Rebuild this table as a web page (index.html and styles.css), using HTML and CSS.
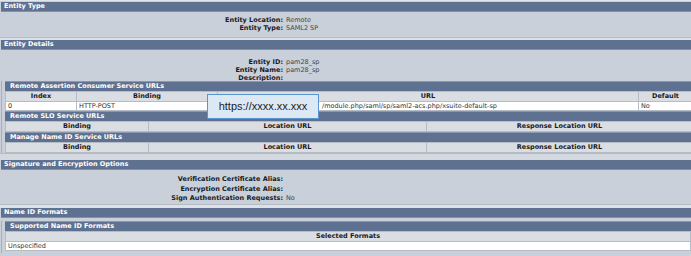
FILE: index.html
```html
<!DOCTYPE html>
<html>
<head>
<meta charset="utf-8">
<link rel="stylesheet" href="styles.css">
</head>
<body>
<div class="page">
  <div class="hdr">Entity Type</div>
  <div class="kv kv-type">
    <span class="k">Entity Location:</span><span class="v">Remote</span>
    <span class="k">Entity Type:</span><span class="v">SAML2 SP</span>
  </div>
  <div class="sep"></div>
  <div class="hdr">Entity Details</div>
  <div class="kv kv-details">
    <span class="k">Entity ID:</span><span class="v">pam28_sp</span>
    <span class="k">Entity Name:</span><span class="v">pam28_sp</span>
    <span class="k">Description:</span><span class="v"></span>
  </div>
  <div class="sub">
    <div class="subhdr">Remote Assertion Consumer Service URLs</div>
    <table class="grid">
      <colgroup><col class="c-idx"><col class="c-bind"><col class="c-url"><col class="c-def"></colgroup>
      <tr class="th"><td>Index</td><td>Binding</td><td>URL</td><td>Default</td></tr>
      <tr class="td"><td>0</td><td>HTTP-POST</td><td><span class="url-tail">/module.php/saml/sp/saml2-acs.php/xsuite-default-sp</span></td><td>No</td></tr>
    </table>
    <div class="subhdr">Remote SLO Service URLs</div>
    <table class="grid">
      <colgroup><col class="c-b2"><col class="c-loc"><col class="c-resp"></colgroup>
      <tr class="th"><td>Binding</td><td>Location URL</td><td>Response Location URL</td></tr>
    </table>
    <div class="subhdr">Manage Name ID Service URLs</div>
    <table class="grid">
      <colgroup><col class="c-b2"><col class="c-loc"><col class="c-resp"></colgroup>
      <tr class="th"><td>Binding</td><td>Location URL</td><td>Response Location URL</td></tr>
    </table>
    <div class="tip">https://xxxx.xx.xxx</div>
  </div>
  <div class="gap"></div>
  <div class="hdr">Signature and Encryption Options</div>
  <div class="kv kv-sig">
    <span class="k">Verification Certificate Alias:</span><span class="v"></span>
    <span class="k">Encryption Certificate Alias:</span><span class="v"></span>
    <span class="k">Sign Authentication Requests:</span><span class="v">No</span>
  </div>
  <div class="sep sep-sig"></div>
  <div class="hdr">Name ID Formats</div>
  <div class="sub sub-fmt">
    <div class="subhdr">Supported Name ID Formats</div>
    <table class="grid">
      <tr class="th"><td>Selected Formats</td></tr>
      <tr class="td"><td>Unspecified</td></tr>
    </table>
  </div>
</div>
</body>
</html>
```

FILE: styles.css
```css
html, body {
  margin: 0;
  padding: 0;
  background: #c9d0da;
}
.page {
  position: relative;
  width: 691px;
  height: 256px;
  overflow: hidden;
  padding-top: 1px;
  box-sizing: border-box;
  background: #c9d0da;
  border-top: 1px solid #e2e5ea;
  font-family: "DejaVu Sans", Verdana, sans-serif;
  font-size: 6.5px;
  color: #222;
}
.hdr {
  background: #5f7190;
  color: #fff;
  font-weight: bold;
  height: 9px;
  line-height: 9px;
  padding-left: 3px;
  margin-left: 1px;
  border-bottom: 1px solid #8390a8;
}
.kv {
  display: grid;
  grid-template-columns: 283px auto;
  column-gap: 3px;
  line-height: 8px;
}
.kv .k {
  text-align: right;
  font-weight: bold;
  color: #1a1a1a;
}
.kv .v {
  color: #444;
}
.kv-type {
  padding: 4px 0 5px;
  height: 16px;
}
.kv-details {
  padding: 8px 0 0;
  height: 23px;
}
.kv-sig {
  padding: 5px 0 0;
  height: 29px;
  line-height: 8.5px;
}
.sep {
  height: 2px;
  background: #dde0e5;
  border-top: 1px solid #b5bcc6;
}
.sep-sig {
  height: 3px;
}
.gap {
  height: 6px;
  border-top: 1px solid #b3bac4;
  background: #d4d9e0;
}
.sub {
  position: relative;
  padding-left: 3px;
  margin-left: 1px;
  border-left: 1px solid #a7afba;
}
.sub-fmt {
  margin-top: 3px;
  padding-bottom: 2px;
}
.subhdr {
  background: #5f7190;
  color: #fff;
  font-weight: bold;
  height: 9px;
  line-height: 9px;
  padding-left: 5px;
  border-top: 1px solid #8a97ad;
}
.grid {
  width: 100%;
  border-collapse: collapse;
  table-layout: fixed;
}
.grid td {
  height: 9px;
  line-height: 9px;
  padding: 0 2px;
  border: 1px solid #b5bcc6;
  white-space: nowrap;
  overflow: hidden;
}
.grid .th td {
  background: #dadde2;
  font-weight: bold;
  text-align: center;
  color: #1a1a1a;
}
.grid .td td {
  height: 8px;
  line-height: 8px;
  background: #ffffff;
  color: #333;
  text-align: left;
}
.url-tail {
  padding-left: 102px;
}
.c-idx { width: 71px; }
.c-bind { width: 141px; }
.c-url { width: 421px; }
.c-def { width: 54px; }
.c-b2 { width: 143px; }
.c-loc { width: 278px; }
.c-resp { width: 266px; }
.tip {
  position: absolute;
  left: 205px;
  top: 13px;
  width: 110px;
  height: 23px;
  background: #dde8f5;
  border: 1px solid #5b93cf;
  font-family: "Liberation Sans", Arial, sans-serif;
  font-size: 11px;
  line-height: 23px;
  text-align: center;
  color: #1c1c1c;
}
```
